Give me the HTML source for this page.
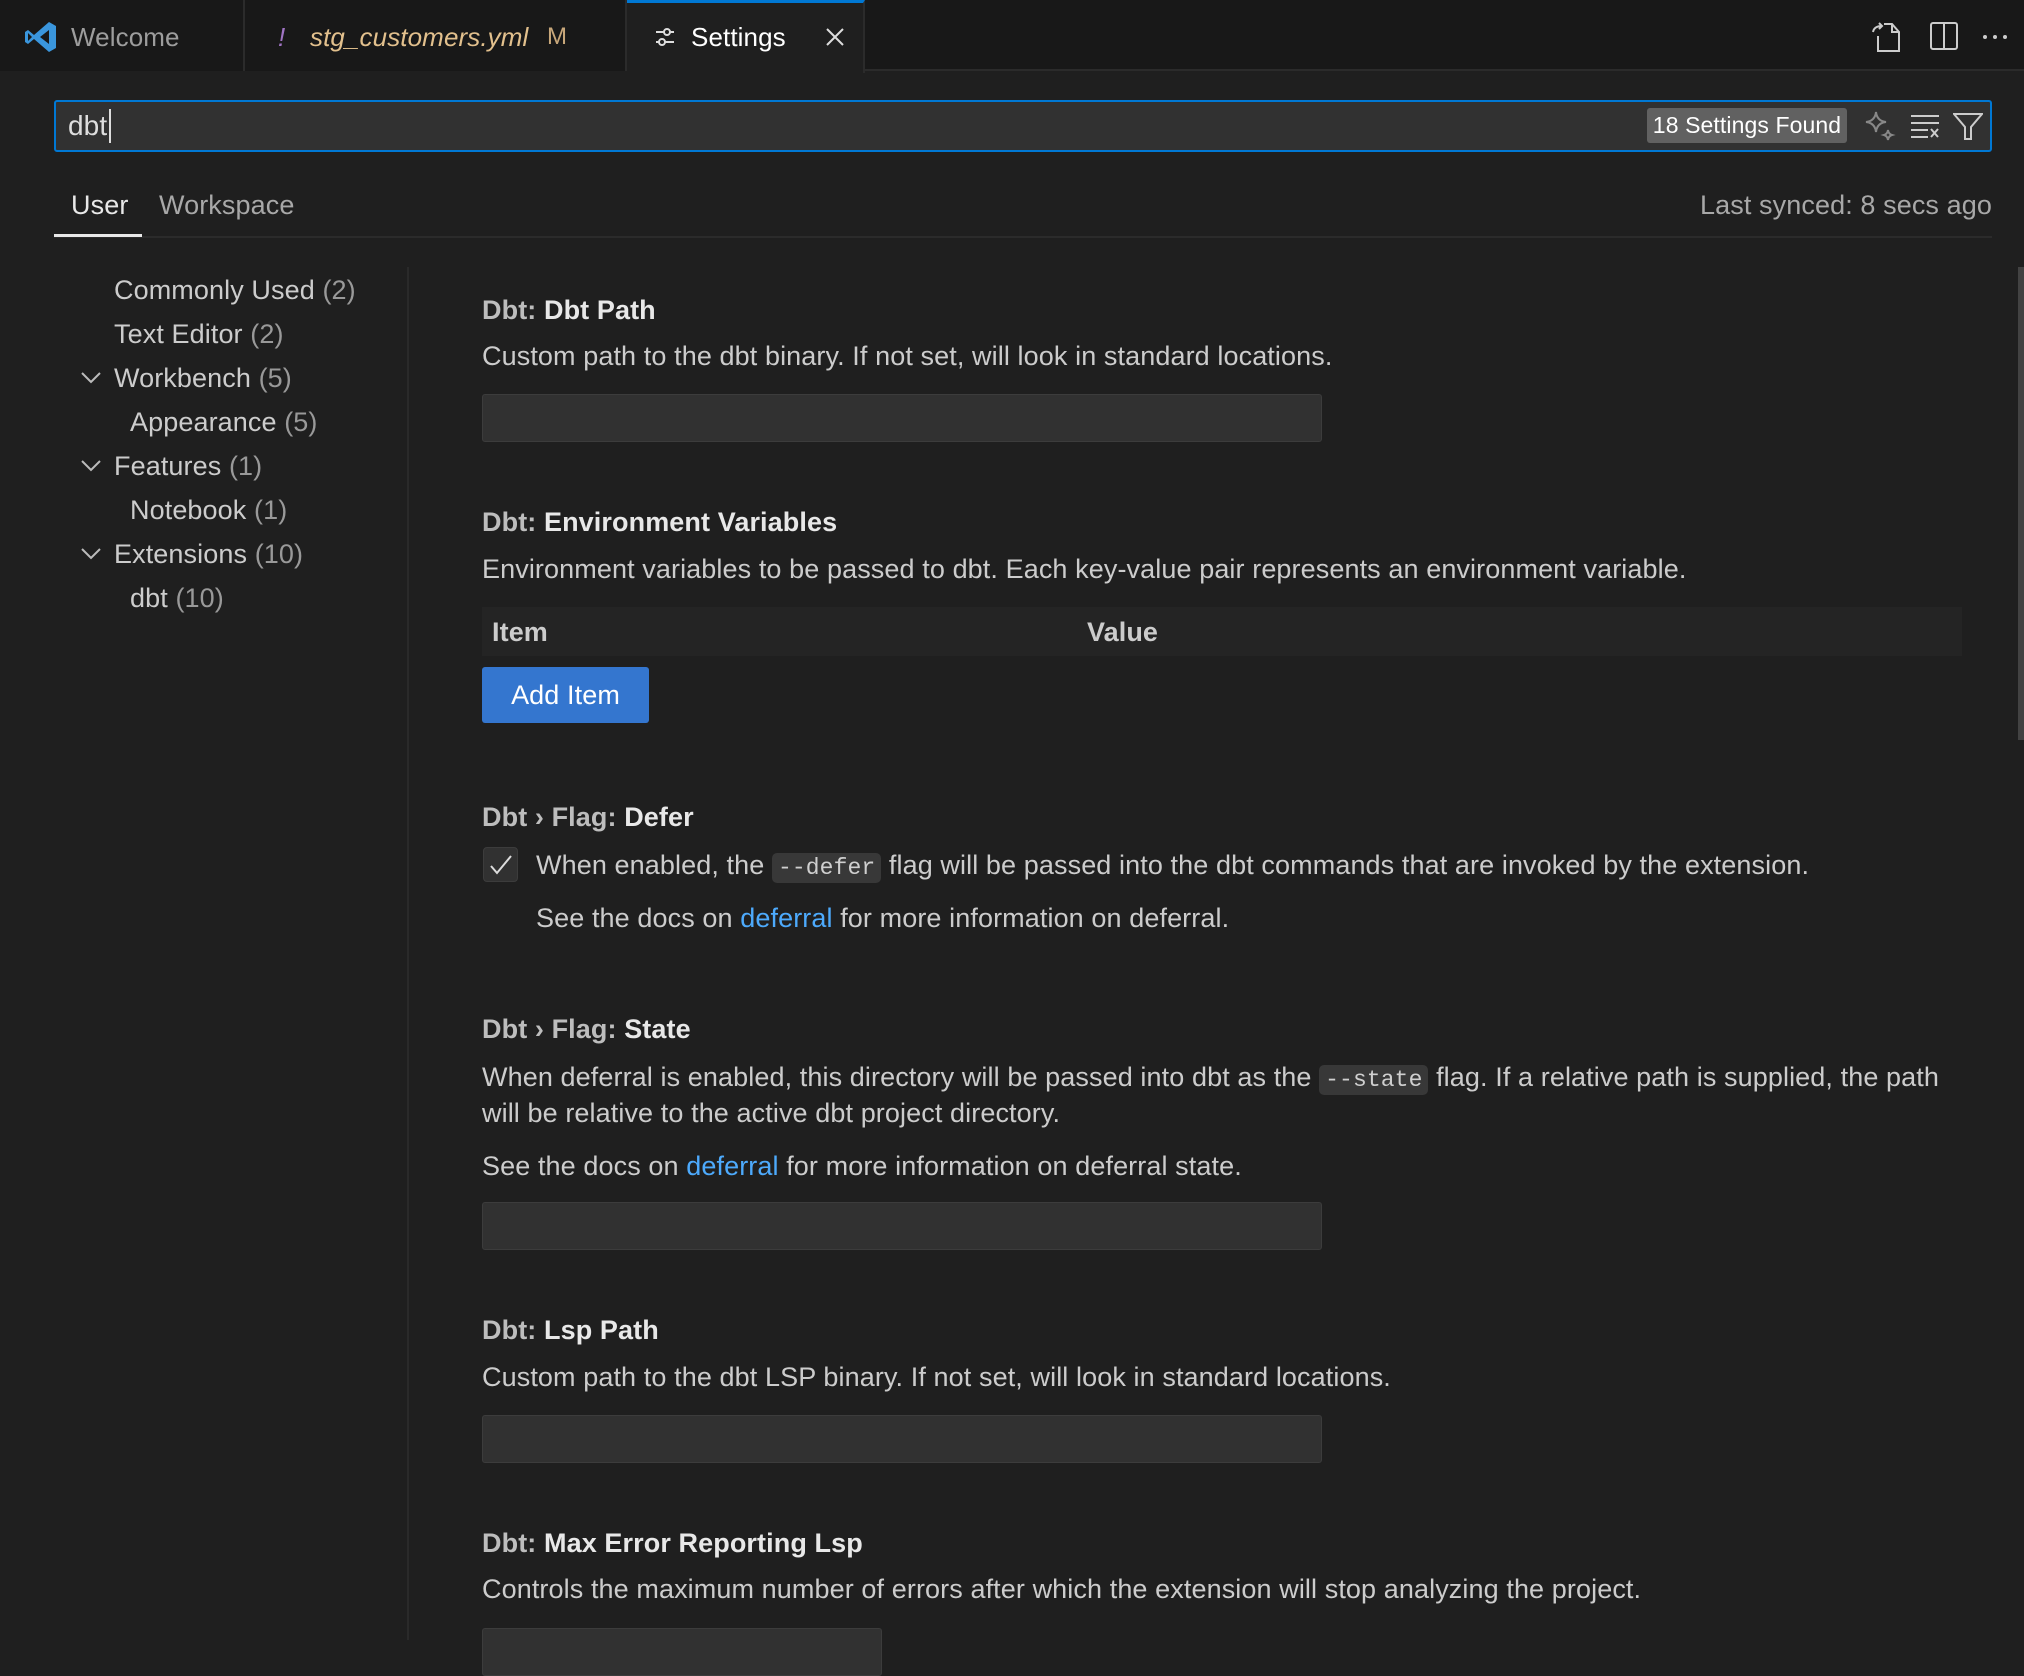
<!DOCTYPE html>
<html><head><meta charset="utf-8"><style>
*{margin:0;padding:0;box-sizing:border-box}
body{width:2024px;height:1640px;background:#1f1f1f;font-family:"Liberation Sans",sans-serif;color:#cccccc;position:relative;overflow:hidden;font-size:27px;letter-spacing:0.1px}
.a{position:absolute;white-space:nowrap;line-height:36px}
.tabbar{position:absolute;left:0;top:0;width:2024px;height:71px;background:#181818;border-bottom:2px solid #2b2b2b}
.tab{position:absolute;top:0;height:71px;border-right:2px solid #2b2b2b;background:#181818}
.input{position:absolute;left:482px;width:840px;height:48px;background:#313131;border:1px solid #3c3c3c;border-radius:3px}
.t{font-weight:bold;color:#bdbdbd}
.t b{color:#e8e8e8}
.link{color:#4daafc}
code{font-family:"Liberation Mono",monospace;font-size:23px;background:#383838;border-radius:5px;padding:2px 6px;color:#cfcfcf}
</style></head><body>
<div class="tabbar"></div>
<div class="tab" style="left:0;width:245px"></div>
<div class="tab" style="left:245px;width:382px"></div>
<div class="tab" style="left:627px;width:238px;background:#1f1f1f;height:73px;border-top:3px solid #0078d4"></div>
<svg style="position:absolute;left:24px;top:20px" width="34" height="34" viewBox="0 0 34 34"><path d="M25 2 L32 6 V28 L25 32 L10 19 L4 24 L1 22 V12 L4 10 L10 15 Z M25 10 L16 17 L25 24 Z M4 13 V21 L8 17 Z" fill="#3a96dd"/></svg>
<div class="a" style="left:71px;top:19px;color:#9d9d9d;font-size:26px">Welcome</div>
<div class="a" style="left:278px;top:19px;color:#a074c4;font-size:26px;font-style:italic">!</div>
<div class="a" style="left:310px;top:19px;color:#e2c08d;font-size:26px;font-style:italic">stg_customers.yml</div>
<div class="a" style="left:547px;top:19px;color:#c8a77a;font-size:24px">M</div>
<svg style="position:absolute;left:654px;top:26px" width="22" height="22" viewBox="0 0 22 22" stroke="#ddd" stroke-width="2" fill="none"><path d="M2 6H20M2 16H20"/><circle cx="13" cy="6" r="3" fill="#1f1f1f"/><circle cx="8" cy="16" r="3" fill="#1f1f1f"/></svg>
<div class="a" style="left:691px;top:19px;color:#fff;font-size:26px">Settings</div>
<svg style="position:absolute;left:826px;top:28px" width="18" height="18" viewBox="0 0 18 18" stroke="#ddd" stroke-width="2"><path d="M1 1L17 17M17 1L1 17"/></svg>
<svg style="position:absolute;left:1872px;top:22px" width="32" height="30" viewBox="0 0 32 30" fill="none" stroke="#ccc" stroke-width="2"><path d="M6 14V29H27V10L20 2H12M20 2V10H27M1 10C2 5 6 4 10 4M7 1L10 4L7 7"/></svg>
<svg style="position:absolute;left:1930px;top:22px" width="28" height="28" viewBox="0 0 28 28" fill="none" stroke="#ccc" stroke-width="2"><rect x="1" y="1" width="26" height="26" rx="2"/><path d="M14 1V27"/></svg>
<svg style="position:absolute;left:1982px;top:34px" width="26" height="6" viewBox="0 0 26 6" fill="#ccc"><circle cx="3" cy="3" r="2"/><circle cx="13" cy="3" r="2"/><circle cx="23" cy="3" r="2"/></svg>
<div style="position:absolute;left:54px;top:100px;width:1938px;height:52px;background:#313131;border:2px solid #0078d4;border-radius:3px"></div>
<div class="a" style="left:68px;top:108px;color:#ddd;font-size:28px">dbt</div>
<div style="position:absolute;left:109px;top:109px;width:2px;height:34px;background:#ddd"></div>
<div class="a" style="left:1647px;top:108px;width:200px;height:35px;background:#616161;border-radius:3px;color:#fff;font-size:23px;text-align:center;line-height:35px">18 Settings Found</div>
<svg style="position:absolute;left:1864px;top:110px" width="32" height="32" viewBox="0 0 32 32" fill="none" stroke="#888" stroke-width="2"><path d="M12 2 Q13 11 22 12 Q13 13 12 22 Q11 13 2 12 Q11 11 12 2Z"/><path d="M24 20 Q24.5 24 28 25 Q24.5 26 24 30 Q23.5 26 20 25 Q23.5 24 24 20Z"/></svg>
<svg style="position:absolute;left:1910px;top:114px" width="30" height="26" viewBox="0 0 30 26" stroke="#ccc" stroke-width="2"><path d="M1 2H29M1 9H29M1 16H18M1 23H18M21 15L28 23M28 15L21 23"/></svg>
<svg style="position:absolute;left:1953px;top:112px" width="30" height="28" viewBox="0 0 30 28" fill="none" stroke="#ccc" stroke-width="2"><path d="M1 2H29L18 15V27H12V15Z"/></svg>
<div class="a" style="left:71px;top:187px;color:#e8e8e8">User</div>
<div class="a" style="left:159px;top:187px;color:#a8a8a8">Workspace</div>
<div class="a" style="right:32px;top:187px;color:#a8a8a8">Last synced: 8 secs ago</div>
<div style="position:absolute;left:54px;top:236px;width:1938px;height:2px;background:#2b2b2b"></div>
<div style="position:absolute;left:54px;top:234px;width:88px;height:3px;background:#e8e8e8"></div>
<div style="position:absolute;left:407px;top:267px;width:2px;height:1373px;background:#2a2a2a"></div>
<div class="a" style="left:114px;top:272px">Commonly Used <span style="color:#999">(2)</span></div>
<div class="a" style="left:114px;top:316px">Text Editor <span style="color:#999">(2)</span></div>
<div class="a" style="left:114px;top:360px">Workbench <span style="color:#999">(5)</span></div>
<div class="a" style="left:130px;top:404px">Appearance <span style="color:#999">(5)</span></div>
<div class="a" style="left:114px;top:448px">Features <span style="color:#999">(1)</span></div>
<div class="a" style="left:130px;top:492px">Notebook <span style="color:#999">(1)</span></div>
<div class="a" style="left:114px;top:536px">Extensions <span style="color:#999">(10)</span></div>
<div class="a" style="left:130px;top:580px">dbt <span style="color:#999">(10)</span></div>
<svg style="position:absolute;left:81px;top:372px" width="20" height="12" viewBox="0 0 20 12" fill="none" stroke="#bbb" stroke-width="2"><path d="M1 1L10 10L19 1"/></svg>
<svg style="position:absolute;left:81px;top:460px" width="20" height="12" viewBox="0 0 20 12" fill="none" stroke="#bbb" stroke-width="2"><path d="M1 1L10 10L19 1"/></svg>
<svg style="position:absolute;left:81px;top:548px" width="20" height="12" viewBox="0 0 20 12" fill="none" stroke="#bbb" stroke-width="2"><path d="M1 1L10 10L19 1"/></svg>
<div style="position:absolute;left:2018px;top:267px;width:6px;height:473px;background:#424242"></div>
<div class="a t" style="left:482px;top:292px">Dbt: <b>Dbt Path</b></div>
<div class="a" style="left:482px;top:338px">Custom path to the dbt binary. If not set, will look in standard locations.</div>
<div class="input" style="top:394px"></div>
<div class="a t" style="left:482px;top:504px">Dbt: <b>Environment Variables</b></div>
<div class="a" style="left:482px;top:551px">Environment variables to be passed to dbt. Each key-value pair represents an environment variable.</div>
<div style="position:absolute;left:482px;top:607px;width:1480px;height:49px;background:#242424"></div>
<div class="a t" style="left:492px;top:614px;color:#ccc">Item</div>
<div class="a t" style="left:1087px;top:614px;color:#ccc">Value</div>
<div class="a" style="left:482px;top:667px;width:167px;height:56px;background:#3476cf;border-radius:3px;color:#fff;text-align:center;line-height:56px">Add Item</div>
<div class="a t" style="left:482px;top:799px">Dbt › Flag: <b>Defer</b></div>
<div style="position:absolute;left:483px;top:847px;width:35px;height:35px;background:#313131;border:1px solid #3c3c3c;border-radius:4px"></div>
<svg style="position:absolute;left:489px;top:853px" width="24" height="24" viewBox="0 0 24 24" fill="none" stroke="#ddd" stroke-width="2"><path d="M2 13L8 20L22 3"/></svg>
<div class="a" style="left:536px;top:847px">When enabled, the <code>--defer</code> flag will be passed into the dbt commands that are invoked by the extension.</div>
<div class="a" style="left:536px;top:900px">See the docs on <span class="link">deferral</span> for more information on deferral.</div>
<div class="a t" style="left:482px;top:1011px">Dbt › Flag: <b>State</b></div>
<div class="a" style="left:482px;top:1059px">When deferral is enabled, this directory will be passed into dbt as the <code>--state</code> flag. If a relative path is supplied, the path</div>
<div class="a" style="left:482px;top:1095px">will be relative to the active dbt project directory.</div>
<div class="a" style="left:482px;top:1148px">See the docs on <span class="link">deferral</span> for more information on deferral state.</div>
<div class="input" style="top:1202px"></div>
<div class="a t" style="left:482px;top:1312px">Dbt: <b>Lsp Path</b></div>
<div class="a" style="left:482px;top:1359px">Custom path to the dbt LSP binary. If not set, will look in standard locations.</div>
<div class="input" style="top:1415px"></div>
<div class="a t" style="left:482px;top:1525px">Dbt: <b>Max Error Reporting Lsp</b></div>
<div class="a" style="left:482px;top:1571px">Controls the maximum number of errors after which the extension will stop analyzing the project.</div>
<div class="input" style="top:1628px;width:400px"></div>
</body></html>
